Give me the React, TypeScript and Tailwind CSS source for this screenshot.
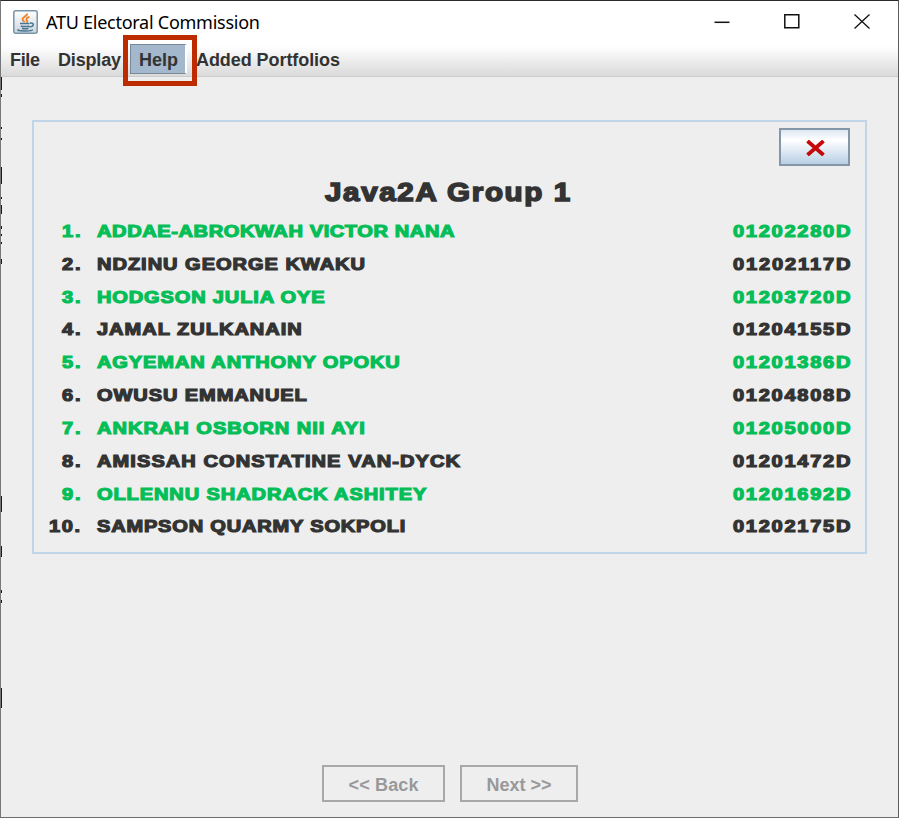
import { useLayoutEffect, useRef, useState } from 'react';

const members = [
  { name: 'ADDAE-ABROKWAH VICTOR NANA', id: '01202280D', width: 357 },
  { name: 'NDZINU GEORGE KWAKU', id: '01202117D', width: 268 },
  { name: 'HODGSON JULIA OYE', id: '01203720D', width: 228 },
  { name: 'JAMAL ZULKANAIN', id: '01204155D', width: 205 },
  { name: 'AGYEMAN ANTHONY OPOKU', id: '01201386D', width: 303 },
  { name: 'OWUSU EMMANUEL', id: '01204808D', width: 210 },
  { name: 'ANKRAH OSBORN NII AYI', id: '01205000D', width: 268 },
  { name: 'AMISSAH CONSTATINE VAN-DYCK', id: '01201472D', width: 363 },
  { name: 'OLLENNU SHADRACK ASHITEY', id: '01201692D', width: 329 },
  { name: 'SAMPSON QUARMY SOKPOLI', id: '01202175D', width: 308 },
];

/* Slivers of the desktop behind the window, seen along its edges. */
const leftEdge = [
  { top: 77, height: 13 }, { top: 94, height: 3 }, { top: 127, height: 2 }, { top: 138, height: 2 },
  { top: 167, height: 17 }, { top: 197, height: 2 }, { top: 205, height: 9 }, { top: 226, height: 3 },
  { top: 234, height: 2 }, { top: 242, height: 2 }, { top: 259, height: 5 }, { top: 496, height: 16 },
  { top: 546, height: 11 }, { top: 590, height: 3 }, { top: 600, height: 3 }, { top: 688, height: 20 },
];
const rightEdge = [
  { top: 585, height: 3 }, { top: 591, height: 5 }, { top: 599, height: 3 }, { top: 630, height: 2 },
  { top: 651, height: 2 }, { top: 688, height: 20 },
];

/* Tracks a line of text out to a given measure. */
function Tracked({ text, width, stretch = 1 }: { text: string; width: number; stretch?: number }) {
  const ref = useRef<HTMLSpanElement>(null);
  const [spacing, setSpacing] = useState(0);
  useLayoutEffect(() => {
    if (ref.current) {
      const natural = ref.current.offsetWidth;
      setSpacing((width / stretch - natural) / (text.length - 1));
    }
  }, [text, width, stretch]);
  return (
    <span className="inline-block text-left whitespace-pre" style={{ width }}>
      <span ref={ref} className="inline-block origin-left" style={{ letterSpacing: spacing, transform: stretch === 1 ? undefined : `scaleX(${stretch})` }}>
        {text}
      </span>
    </span>
  );
}

function JavaIcon() {
  return (
    <svg className="h-6 w-[25px]" viewBox="0 0 25 24" fill="none">
      <defs>
        <linearGradient id="tile" x2="0" y2="1">
          <stop stopColor="#fff" />
          <stop offset="1" stopColor="#cbd5dc" />
        </linearGradient>
      </defs>
      <rect x=".8" y=".8" width="23.4" height="22.4" rx="2" fill="url(#tile)" stroke="#7896aa" strokeWidth="1.5" />
      <path d="M14 3.5c1 2.3-5 3.7-4.5 6 .2 1.1 1.7 1.8 1.9 2.8M16.5 7c-3 .7-4 2.3-2.5 3.5.7.8.2 1.4-.6 1.9" stroke="#ef822b" strokeWidth="1.8" />
      <path d="M7 13.5h9.5M7.8 16c1.8.8 6.4.8 8.5 0M9 18.2c2 .7 4.6.7 6.5 0M17 13.2c4.5-1 4.5 3.3-.5 3.8M5.5 19.4c-1.5.9 0 1.6 6.5 1.6 5 0 8-.5 7-1.5" stroke="#477693" strokeWidth="1.5" />
    </svg>
  );
}

export default function App() {
  return (
    <div className="relative flex h-[818px] w-[899px] flex-col overflow-hidden border border-t-[#2b2b2b] border-r-[#5d5d5d] border-b-[#6b6b6b] border-l-[#777777] bg-[#eeeeee] font-['Liberation_Sans',Arial,sans-serif] text-[#333333]">
      <header className="flex h-[45px] shrink-0 items-center bg-white pl-[12px] pr-[28px] pb-[4px]">
        <JavaIcon />
        <h1 className="mt-[2px] ml-[8px] font-['Noto_Sans',sans-serif] text-[18px] text-black">
          <Tracked text="ATU Electoral Commission" width={214} />
        </h1>
        <div className="ml-auto flex items-center gap-[54px]">
          <svg className="h-[17px] w-4" viewBox="0 0 16 17" stroke="#111" strokeWidth="1.5"><path d="M.5 9.3h15" /></svg>
          <svg className="h-[17px] w-4" viewBox="0 0 16 17" fill="none" stroke="#111" strokeWidth="1.5"><path d="M.8 1.7h14v13h-14z" /></svg>
          <svg className="h-[17px] w-4" viewBox="0 0 16 17" stroke="#111" strokeWidth="1.3"><path d="m.5 1.5 15 14m0-14-15 14" /></svg>
        </div>
      </header>
      <nav className="flex h-[31px] shrink-0 border-b border-[#cccccc] bg-linear-to-b from-white to-[#dadada] text-[18px] leading-[28px] font-bold">
        <span className="ml-[9px] w-[48px]"><Tracked text="File" width={30} /></span>
        <span className="w-[71px]"><Tracked text="Display" width={63} /></span>
        <span className="ml-px -mt-[2px] h-[30px] w-[57px] border border-r-2 border-r-white border-[#7a8a99] bg-[#a3b8cc] pt-[1px] pl-[8px]"><Tracked text="Help" width={39} /></span>
        <span className="ml-[9px]"><Tracked text="Added Portfolios" width={144} /></span>
      </nav>
      <div className="absolute top-[34px] left-[122px] h-[51px] w-[74px] border-[5px] border-[#bd2c00]" />

      <main className="mt-[43px] ml-[31px] h-[434px] w-[835px] shrink-0 border-2 border-[#c0d5e8] font-black">
        <button className="mt-[6px] ml-[745px] flex h-[38px] w-[71px] items-center justify-center border-2 border-[#8497a9] bg-linear-to-b from-[#dde8f3] via-white via-30% to-[#b8cfe5]">
          <svg className="mt-[2px] ml-[2px] h-[16px] w-[19px]" viewBox="0 0 19 16" fill="none" stroke="#c50808" strokeWidth="3.8"><path d="m1.5 1 16 14m0-14-16 14" /></svg>
        </button>
        <h2 className="mt-[6px] ml-[291px] h-[42px] text-[25.5px] leading-[40px] [-webkit-text-stroke:1.5px_currentColor]">
          <Tracked text="Java2A Group 1" width={245} stretch={1.16} />
        </h2>
        <ol className="text-[17.3px] leading-[34px] [-webkit-text-stroke:1.2px_currentColor]">
          {members.map((m, i) => (
            <li key={m.id} className="flex h-[32.83px] pr-[15px] odd:text-[#05be58]">
              <span className="mr-[17px] w-[46px] text-right"><Tracked text={`${i + 1}.`} width={i === 9 ? 31 : 18} stretch={1.16} /></span>
              <Tracked text={m.name} width={m.width} stretch={1.16} />
              <span className="ml-auto"><Tracked text={m.id} width={117} stretch={1.16} /></span>
            </li>
          ))}
        </ol>
      </main>

      <footer className="mt-[211px] ml-[321px] flex shrink-0 gap-[15px] text-[18px] font-bold text-[#999999]">
        <button className="h-[37px] w-[123px] border-2 border-[#a8a8a8] pt-[3px]"><Tracked text="<< Back" width={70} /></button>
        <button className="h-[37px] w-[118px] border-2 border-[#a8a8a8] pt-[3px]"><Tracked text="Next >>" width={65} /></button>
      </footer>

      {leftEdge.map((s) => (
        <i key={s.top} className="absolute -left-px w-[2px] bg-[#1c1a1e]" style={{ top: s.top - 1, height: s.height }} />
      ))}
      {rightEdge.map((s) => (
        <i key={s.top} className="absolute -right-px w-px bg-[#1c1a1e]" style={{ top: s.top - 1, height: s.height }} />
      ))}
      <i className="absolute -top-px -left-px h-[77px] w-px bg-[#2b2b2b]" />
      <i className="absolute -top-px -right-px h-[47px] w-px bg-[#2b2b2b]" />
    </div>
  );
}
